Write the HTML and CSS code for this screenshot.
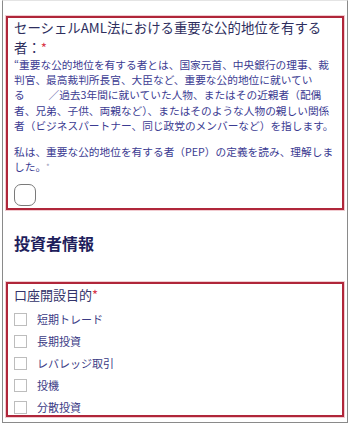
FILE: index.html
```html
<!DOCTYPE html>
<html lang="ja">
<head>
<meta charset="utf-8">
<link rel="stylesheet" href="styles.css">
</head>
<body>
<div class="frame">
  <section class="box box-pep">
    <h2 class="q-title">セーシェルAML法における重要な公的地位を有する<br>者：<span class="req">*</span></h2>
    <p class="q-text">“重要な公的地位を有する者とは、国家元首、中央銀行の理事、裁<br>判官、最高裁判所長官、大臣など、重要な公的地位に就いてい<br>る　　 ／過去3年間に就いていた人物、またはその近親者（配偶<br>者、兄弟、子供、両親など）、またはそのような人物の親しい関係<br>者（ビジネスパートナー、同じ政党のメンバーなど）を指します。</p>
    <p class="q-text q-confirm">私は、重要な公的地位を有する者（PEP）の定義を読み、理解しま<br>した。<span class="req-s">*</span></p>
    <span class="big-check"></span>
  </section>
  <h3 class="section-head">投資者情報</h3>
  <section class="box box-purpose">
    <div class="p-title">口座開設目的<span class="req">*</span></div>
    <ul class="opts">
      <li class="opt"><span class="cb"></span><span>短期トレード</span></li>
      <li class="opt"><span class="cb"></span><span>長期投資</span></li>
      <li class="opt"><span class="cb"></span><span>レバレッジ取引</span></li>
      <li class="opt"><span class="cb"></span><span>投機</span></li>
      <li class="opt"><span class="cb"></span><span>分散投資</span></li>
    </ul>
  </section>
</div>
</body>
</html>
```

FILE: styles.css
```css
html, body {
  margin: 0;
  padding: 0;
  background: #fff;
}
body {
  font-family: "Noto Sans CJK JP", "Noto Sans", sans-serif;
}
.frame {
  box-sizing: border-box;
  margin-left: 2px;
  width: 346px;
  height: 423px;
  border: 1px solid #8a8a8a;
  border-top-color: #e4e4e4;
  padding: 15px 3px 0 3px;
}
.box {
  box-sizing: border-box;
  border: 2px solid #b0263a;
  box-shadow: 0 0 0 1px rgba(225, 140, 150, 0.45);
  padding: 0 6px 2px 6px;
}
.box-pep {
  height: 194px;
}
.q-title {
  margin: 0;
  font-size: 13.4px;
  font-weight: 400;
  line-height: 19.5px;
  color: #2e2e5e;
  white-space: nowrap;
}
.req {
  color: #d9364a;
}
.req-s {
  color: #9a9ab8;
  font-size: 8px;
  vertical-align: top;
}
.q-text {
  margin: 0;
  font-size: 10.7px;
  line-height: 15.2px;
  color: #3b3b92;
  white-space: nowrap;
}
.q-confirm {
  margin-top: 11px;
}
.big-check {
  display: block;
  margin-top: 10px;
  width: 22px;
  height: 22px;
  box-sizing: border-box;
  border: 1.5px solid #7a7a7a;
  border-radius: 7px;
}
.section-head {
  margin: 22px 0 28px 8px;
  font-size: 16px;
  line-height: 22px;
  font-weight: 700;
  color: #1e1e5c;
}
.box-purpose {
  height: 135px;
  overflow: hidden;
  padding-top: 1px;
}
.p-title {
  font-size: 13px;
  line-height: 20px;
  color: #33336a;
}
.opts {
  list-style: none;
  margin: 3px 0 0 0;
  padding: 0;
}
.opt {
  display: flex;
  align-items: center;
  height: 22px;
  font-size: 11px;
  color: #3b3b85;
}
.cb {
  box-sizing: border-box;
  width: 13px;
  height: 13px;
  border: 1px solid #bdbdbd;
  margin-right: 10px;
  flex: none;
}
```
